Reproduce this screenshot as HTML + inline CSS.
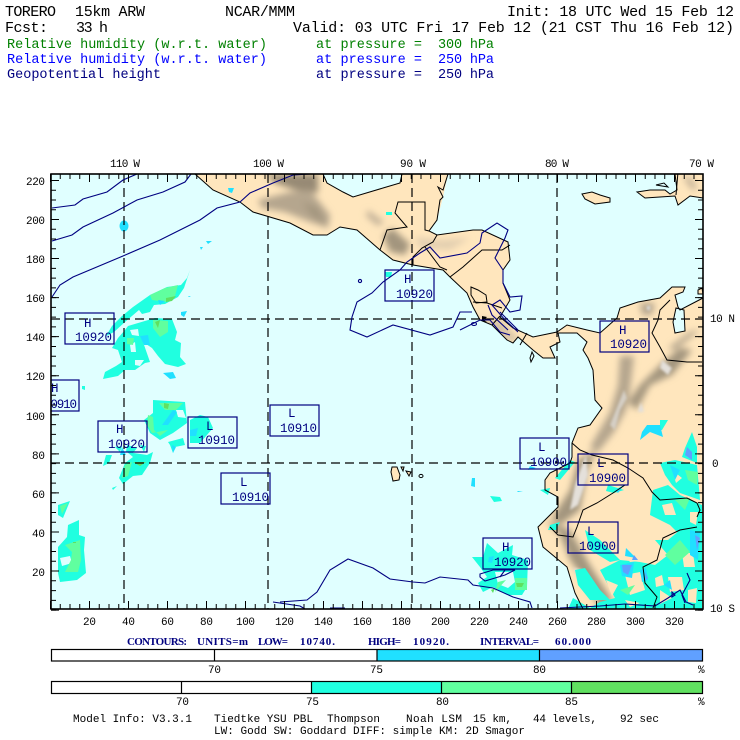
<!DOCTYPE html>
<html><head><meta charset="utf-8"><style>
html,body{margin:0;padding:0;background:#fff;width:740px;height:740px;overflow:hidden}
svg{display:block}
text{font-family:"Liberation Mono",monospace;fill:#000;}
.h{font-size:15px}.g{font-size:13.5px;fill:#008000}.b{font-size:13.5px;fill:#0000ff}.n{font-size:13.5px;fill:#000080}
.a{font-size:11px}.k{font-size:12.5px;fill:#000080}
.c{font-family:"Liberation Serif",serif;font-weight:bold;font-size:11px;fill:#000080}
.m{font-size:11px}
</style></head><body>
<svg width="740" height="740" viewBox="0 0 740 740" xmlns="http://www.w3.org/2000/svg">
<defs>
<clipPath id="map"><rect x="51" y="174" width="652" height="435"/></clipPath>
<clipPath id="landclip"><path id="lp" d="M195,174 L213,190 L240,202 L253,212 L290,223 L313,235 L327,235 L340,227 L357,230 L380,250 L393,260 L413,265 L443,270 L450,277 L467,293 L473,307 L480,320 L492,325 L507,340 L513,343 L518,337 L533,350 L543,358 L555,358 L550,347 L560,342 L558,333 L577,333 L587,342 L583,350 L588,358 L593,370 L595,400 L602,408 L590,425 L578,428 L572,443 L572,457 L570,463 L550,473 L545,480 L545,490 L558,497 L558,507 L548,517 L538,527 L543,547 L567,567 L575,593 L583,609 L703,609 L703,298 L680,310 L678,307 L675,295 L683,292 L685,287 L672,287 L660,298 L638,302 L620,308 L617,318 L600,333 L587,330 L567,325 L557,332 L533,337 L513,328 L500,317 L510,300 L503,283 L503,270 L510,260 L508,242 L482,230 L473,230 L437,235 L429,231 L437,220 L440,200 L443,197 L438,187 L443,190 L448,174 L402,174 L400,183 L383,188 L353,197 L343,192 L327,183 L323,174 Z M582,194 L592,192 L600,195 L610,198 L610,202 L595,204 L585,199 Z M637,192 L650,190 L665,190 L670,194 L677,190 L675,174 L703,174 L703,198 L690,196 L678,205 L675,196 L660,197 L645,198 Z M702,288 L698,290 L698,294 L703,294 Z M392,467 L397,467 L400,475 L399,480 L393,481 L391,472 Z M401,467 L404,467 L403,471 Z M406,471 L411,472 L409,476 Z"/></clipPath>
<filter id="bl" x="-20%" y="-20%" width="140%" height="140%"><feGaussianBlur stdDeviation="3.5"/></filter>
<filter id="bs" x="-30%" y="-30%" width="160%" height="160%"><feGaussianBlur stdDeviation="1.2"/></filter>
</defs>
<rect width="740" height="740" fill="#fff"/>

<text class="h" x="5" y="16" textLength="51">TORERO</text>
<text class="h" x="75" y="16" textLength="70">15km ARW</text>
<text class="h" x="225" y="16" textLength="70">NCAR/MMM</text>
<text class="h" x="507" y="16" textLength="227">Init: 18 UTC Wed 15 Feb 12</text>
<text class="h" x="5" y="32" textLength="43">Fcst:</text>
<text class="h" x="76" y="32" textLength="32">33 h</text>
<text class="h" x="293" y="32" textLength="441">Valid: 03 UTC Fri 17 Feb 12 (21 CST Thu 16 Feb 12)</text>
<text class="g" x="7" y="48" textLength="260">Relative humidity (w.r.t. water)</text>
<text class="g" x="316" y="48" textLength="106">at pressure =</text>
<text class="g" x="438" y="48" textLength="56">300 hPa</text>
<text class="b" x="7" y="63" textLength="260">Relative humidity (w.r.t. water)</text>
<text class="b" x="316" y="63" textLength="106">at pressure =</text>
<text class="b" x="438" y="63" textLength="56">250 hPa</text>
<text class="n" x="7" y="78" textLength="154">Geopotential height</text>
<text class="n" x="316" y="78" textLength="106">at pressure =</text>
<text class="n" x="438" y="78" textLength="56">250 hPa</text>

<text class="a" x="110" y="167" textLength="30">110 W</text>
<text class="a" x="253" y="167" textLength="31">100 W</text>
<text class="a" x="400" y="167" textLength="26">90 W</text>
<text class="a" x="545" y="167" textLength="24">80 W</text>
<text class="a" x="689" y="167" textLength="25">70 W</text>

<rect x="51" y="174" width="652" height="435" fill="#e0ffff"/>
<g clip-path="url(#map)">
<!-- land -->
<use href="#lp" fill="#ffe6bd"/>
<path d="M402,174 L448,174 L443,197 L437,220 L429,231 L437,235 L425,240 L395,225 L383,188 L400,183Z" fill="#ffe6bd"/>
<!-- terrain -->
<g clip-path="url(#landclip)">
<g filter="url(#bl)" fill="#978a75">
<path d="M265,174 L318,174 L318,193 L295,190 L275,183Z" />
<path fill="#b5a68e" d="M258,200 L290,192 L310,190 L330,215 L328,228 L310,222 L285,212 L262,208Z"/>
<path fill="#a3957e" d="M302,202 L318,208 L326,225 L312,216Z"/>
<path fill="#a3957e" d="M383,236 L392,228 L410,244 L405,255 L390,252Z"/>
<path fill="#c2b198" d="M368,210 L384,222 L378,226 L366,216Z"/>
<path fill="#d5c2a5" d="M476,318 L500,320 L520,340 L510,342 L490,330Z"/>
<path fill="#e3cfb0" d="M415,237 L440,240 L470,238 L450,250 L420,248Z"/>
<path fill="#b5a68e" d="M620,356 L634,356 L630,390 L626,410 L614,432 L598,452 L590,447 L610,412 L618,385Z"/>
<path fill="#a3957e" d="M692,350 L672,375 L650,385 L637,410 L628,402 L640,385 L660,365 L680,348Z"/>
<path fill="#a3957e" d="M597,450 L587,470 L580,510 L560,525 L552,518 L570,490 L578,460Z"/>
<path fill="#a3957e" d="M545,520 L570,530 L590,565 L612,600 L600,609 L585,580 L570,560 L560,535Z"/>
<path fill="#b5a68e" d="M690,332 L700,330 L675,350 L668,348Z"/>
<path fill="#b5a68e" d="M640,303 L655,303 L652,315 L642,315Z"/>
<path fill="#c2b198" d="M683,177 L690,177 L698,188 L692,190Z"/>
</g>
<g filter="url(#bs)" fill="#e4e0da">
<path d="M662,360 L672,368 L668,375 L660,368Z"/>
<path d="M624,390 L627,398 L620,410 L615,430 L610,425 L618,405Z" fill="#d5cfc5"/>
<path d="M641,402 L644,412 L638,412Z"/>
<path d="M586,455 L588,475 L578,505 L570,510 L575,485 L582,465Z"/>
<path d="M573,568 L582,570 L600,598 L595,600 L580,580Z"/>
<path d="M647,306 L650,306 L650,310 L647,310Z" fill="#ddd"/>
</g>
</g>
<!-- lakes -->
<path d="M676,308 L684,310 L685,331 L675,333 L673,322Z" fill="#e0ffff"/>

<!-- rain teal -->
<g fill="#20ffe0">
<path d="M190,270 L187,278 L181,285 L167,287 L150,295 L133,307 L122,316 L112,326 L106,336 L114,332 L125,322 L139,310 L142,314 L150,312 L154,305 L165,304 L178,297 L184,288Z"/>
<path d="M128,326 L155,318 L172,319 L177,332 L175,340 L181,343 L180,357 L186,364 L178,367 L165,364 L158,356 L152,348 L143,342 L150,362 L145,363 L135,370 L125,370 L118,376 L103,379 L105,372 L116,366 L122,362 L118,350 L112,348 L118,338 L125,330Z"/>
<path d="M153,400 L185,402 L187,423 L173,433 L160,440 L150,433 L144,420 L153,413Z"/>
<path d="M168,442 L183,438 L185,445 L175,447 L173,453 L170,445Z"/>
<path d="M190,420 L200,415 L208,417 L213,428 L200,443 L190,443Z"/>
<path d="M103,466 L106,455 L112,455 L109,463Z"/>
<path d="M115,447 L122,446 L120,452Z M127,445 L137,448 L133,453 L126,452Z M140,445 L146,446 L144,452Z"/>
<path d="M127,452 L147,455 L153,452 L150,463 L142,475 L133,476 L123,484 L119,478 L125,463 L133,457Z"/>
<path d="M112,488 L117,486 L113,490Z"/>
<path d="M58,505 L70,501 L63,518 L58,515Z"/>
<path d="M68,525 L79,520 L79,535 L85,537 L84,550 L86,573 L77,580 L60,582 L58,573 L58,547 L67,537Z"/>
<path d="M487,543 L498,553 L513,545 L512,555 L528,560 L527,587 L522,595 L507,595 L493,587 L483,592 L478,583 L487,577 L480,567 L472,557 L483,557Z"/>
<path d="M490,496 L500,497 L502,501 L494,502Z"/>
<path d="M385,272 L392,272 L391,277 L386,277Z M386,212 L392,212 L392,215 L386,215Z"/>
<path d="M82,386 L85,386 L85,390 L82,389Z"/>
<path d="M660,463 L675,460 L697,465 L700,500 L680,493 L672,485 L665,475Z"/>
<path d="M653,490 L668,485 L680,495 L702,505 L702,530 L690,545 L670,525 L650,515Z"/>
<path d="M655,540 L668,540 L680,530 L702,530 L702,609 L568,609 L573,598 L590,608 L600,602 L615,598 L600,570 L620,560 L640,562 L655,565 L668,555Z"/>
<path d="M660,420 L668,420 L662,430 L660,430Z M570,460 L575,462 L560,480 L555,478Z M540,490 L550,488 L548,495Z"/>
<path d="M550,525 L560,522 L556,530 L548,530Z M585,530 L600,540 L620,560 L610,562 L590,550Z"/>
<path d="M575,570 L585,568 L600,590 L610,600 L590,600 L578,585Z"/>
<path d="M692,432 L697,447 L697,463 L682,457 L685,448Z"/>
<path d="M608,485 L624,490 L614,493 L606,491Z"/>
</g>
<!-- rain holes -->
<g fill="#e0ffff">
<path d="M130,330 L138,329 L139,336 L132,335Z M130,345 L135,342 L136,352 L131,352Z M135,360 L144,360 L140,366 L135,365Z M152,313 L162,309 L166,306 L158,314Z M60,558 L70,556 L72,563 L62,566Z M176,410 L183,410 L186,418 L178,417Z"/>
<path d="M495,572 L513,572 L515,582 L508,588 L498,584Z"/>
</g>
<g fill="#ffe6bd">
<path d="M620,550 L640,545 L650,560 L630,562Z M662,505 L672,503 L676,515 L665,515Z M668,577 L682,577 L684,590 L670,592Z M660,590 L672,598 L660,604Z M682,553 L693,553 L695,567 L684,567Z M625,575 L640,572 L645,590 L630,595Z M606,580 L618,585 L612,596Z M655,578 L662,575 L664,585 L656,587Z M688,590 L697,588 L696,603 L688,602Z M690,512 L698,512 L696,525 L690,522Z M672,470 L682,478 L676,483Z M625,600 L640,603 L630,607Z"/>
</g>
<!-- rain green -->
<g fill="#60ff9f">
<path d="M150,295 L165,288 L178,285 L175,296 L165,302 L152,300Z"/>
<path d="M153,320 L168,321 L168,332 L160,337 L153,328Z"/>
<path d="M127,338 L134,338 L133,345 L127,344Z"/>
<path d="M159,403 L183,403 L176,410 L165,410Z"/>
<path d="M148,415 L153,417 L154,430 L160,436 L168,430 L152,433 L147,425Z"/>
<path d="M125,465 L132,462 L128,476 L122,478Z"/>
<path d="M60,506 L68,503 L62,514Z"/>
<path d="M65,545 L80,540 L81,560 L78,572 L65,572 L71,560 L72,552Z"/>
<path d="M498,582 L506,580 L495,592Z"/>
<path d="M515,578 L527,578 L527,590 L515,590Z"/>
<path d="M675,500 L690,498 L685,510Z M685,470 L698,472 L697,485 L688,480Z M620,590 L635,585 L628,595Z M665,555 L680,540 L690,552 L675,565Z"/>
</g>
<g fill="#60e060">
<path d="M166,298 L176,296 L172,301 L166,302Z M155,322 L160,320 L158,328Z M164,403 L169,404 L168,409 L164,408Z M516,583 L524,583 L522,587 L517,587Z M491,590 L495,588 L493,593Z M73,542 L76,542 L76,543 L73,543Z M133,462 L146,462 L140,466Z"/>
</g>
<!-- rain blue -->
<g fill="#20e0ff">
<ellipse cx="124" cy="226" rx="4.5" ry="5.5"/>
<path d="M228,188 L234,188 L232,193 L229,192Z M206,241 L212,241 L208,244Z M200,247 L203,247 L201,250Z M181,312 L187,311 L184,317 L181,315Z M188,296 L191,296 L189,297Z M158,300 L165,301 L160,305Z M140,336 L148,335 L150,345 L144,345Z M163,373 L173,372 L176,378 L170,379Z M173,410 L177,412 L168,425 L162,425Z M172,445 L176,447 L173,453Z M122,447 L126,455 L120,455Z M190,430 L198,428 L196,436 L190,436Z"/>
<path d="M647,425 L660,425 L663,437 L650,432 L640,440 L642,432Z M472,478 L475,478 L475,487 L471,486Z M517,491 L523,491 L518,492Z M489,557 L494,556 L492,563 L488,562Z M530,466 L536,468 L528,470Z M670,465 L680,470 L675,480Z M615,490 L624,485 L618,493Z M626,548 L636,558 L625,556Z M640,570 L646,568 L648,580 L642,582Z M664,585 L670,580 L672,590Z M690,530 L700,532 L698,560 L690,555Z M620,565 L634,562 L632,578 L622,576Z"/>
</g>
<g fill="#60a0ff">
<path d="M687,447 L692,452 L692,460 L685,455Z M622,565 L632,565 L628,575 L623,572Z M645,572 L648,578 L646,580Z M634,555 L638,560 L632,560Z M695,535 L700,538 L697,550Z"/>
</g>

<!-- land outlines -->
<g fill="none" stroke="#000" stroke-width="1">
<use href="#lp"/>
<path d="M380,250 L387,230 L407,227 L395,213 L398,202 L425,202 L425,230 L429,231 M437,235 L433,242 L422,248 L413,257 L413,265 M425,247 L440,267 L447,270 M450,277 L463,267 L482,250 L502,250 L510,245 M473,302 L487,303 L502,308 M492,325 L500,316 M527,333 L520,345"/>
<path d="M471,287 L478,290 L486,295 L487,302 L476,303 L471,295Z"/>
<path d="M670,300 L660,310 L658,320 L652,333 L660,347 L667,360 L687,362 L702,362"/>
<path d="M572,443 L580,450 L592,455 L613,460 L628,468 L643,478 L652,492 L660,500 L687,498 L697,503 L700,510 L697,517"/>
<path d="M625,485 L613,493 L597,503 L583,510 L577,527 L573,537 L558,535 L550,527"/>
<path d="M697,527 L680,530 L663,538 L657,560 L643,567 L645,583 L657,597 L653,608"/>
<path d="M676,308 L684,310 L685,331 L675,333 L673,322Z"/>
<path d="M678,172 L676,195 M656,185 L668,187 L664,183Z"/>
<path d="M530,358 L532,352 L534,356 L531,362Z"/>
<ellipse cx="421" cy="476" rx="2" ry="1.6"/>
</g>
<path d="M482,316 L487,317 L484,320 L487,322 L482,321Z" fill="#000"/>

<!-- dashed grid -->
<g stroke="#000" stroke-width="1.2" stroke-dasharray="9 5" fill="none">
<path d="M124,174V609M268,174V609M412,174V609M557,174V609M51,319H703M51,463H703"/>
</g>

<!-- contours -->
<g fill="none" stroke="#000080" stroke-width="1.1">
<path d="M52,208 L75,205 L83,199 L107,192 L123,180 L137,174"/>
<path d="M52,241 L72,235 L83,227 L113,213 L137,200 L163,192 L185,182 L191,174"/>
<path d="M52,297 L60,285 L73,277 L123,256 L160,240 L200,220 L217,208 L240,202 L250,193 L273,183 L293,175 L310,174"/>
<path d="M472,312 L460,312 L453,327 L430,335 L393,325 L367,337 L350,330 L352,317 L357,302 L372,293 L383,282 L400,270 L407,262 L420,253 L430,247 L440,258 L467,253 L480,243 L482,233 L497,223 L508,230 L505,238 L495,258 L503,270 L503,283 L510,297 L522,296 L520,310 L510,312 L500,300 L492,305 L505,320 L518,332"/>
<path d="M460,330 L480,320 L490,320 L500,332 L510,335 M488,305 L492,315 L508,330 M500,312 L518,330"/>
<ellipse cx="360" cy="281" rx="1.6" ry="1.6"/>
<ellipse cx="474" cy="324" rx="2.5" ry="1.5"/>
<path d="M280,602 L307,600 L317,592 L330,570 L348,559 L373,568 L390,579 L413,582 L425,583 L440,577 L468,580 L473,585 L493,588 L513,597 L530,602 L532,608"/>
<path d="M480,577 L485,581 L505,575 L515,570 L493,570 L480,574Z"/>
<path d="M273,602 L300,606 L305,609 M330,608 L345,608"/>
<path d="M500,577 L505,570 M560,608 L600,606 L625,604 L655,606 L668,598 L680,590 L686,602 L693,605"/>
<path d="M687,573 L690,580 L682,595 L685,603 M672,592 L675,595 L672,597Z"/>
</g>

<!-- labels -->
<g fill="none" stroke="#000080" stroke-width="1.2">
<rect x="65" y="313" width="49" height="31"/>
<rect x="40" y="380" width="39" height="31"/>
<rect x="98" y="421" width="49" height="31"/>
<rect x="188" y="417" width="49" height="31"/>
<rect x="270" y="405" width="49" height="31"/>
<rect x="221" y="473" width="49" height="31"/>
<rect x="385" y="270" width="49" height="31"/>
<rect x="600" y="321" width="49" height="31"/>
<rect x="520" y="438" width="49" height="31"/>
<rect x="578" y="454" width="50" height="31"/>
<rect x="568" y="522" width="50" height="31"/>
<rect x="483" y="538" width="49" height="31"/>
</g>
<g>
<text class="k" x="84" y="327" textLength="8">H</text><text class="k" x="75" y="341" textLength="37">10920</text>
<text class="k" x="51" y="392" textLength="6">H</text><text class="k" x="44" y="408" textLength="33">10910</text>
<text class="k" x="116" y="433" textLength="8">H</text><text class="k" x="108" y="448" textLength="37">10920</text>
<text class="k" x="206" y="430" textLength="8">L</text><text class="k" x="198" y="444" textLength="37">10910</text>
<text class="k" x="288" y="417" textLength="8">L</text><text class="k" x="280" y="432" textLength="37">10910</text>
<text class="k" x="240" y="486" textLength="8">L</text><text class="k" x="232" y="501" textLength="37">10910</text>
<text class="k" x="404" y="283" textLength="8">H</text><text class="k" x="396" y="298" textLength="37">10920</text>
<text class="k" x="619" y="334" textLength="8">H</text><text class="k" x="610" y="348" textLength="37">10920</text>
<text class="k" x="538" y="451" textLength="8">L</text><text class="k" x="530" y="466" textLength="37">10900</text>
<text class="k" x="597" y="467" textLength="8">L</text><text class="k" x="589" y="482" textLength="37">10900</text>
<text class="k" x="587" y="535" textLength="8">L</text><text class="k" x="579" y="550" textLength="37">10900</text>
<text class="k" x="502" y="551" textLength="8">H</text><text class="k" x="494" y="566" textLength="37">10920</text>
</g>
</g>

<!-- ticks -->
<g fill="none" stroke="#000" stroke-width="1.1">
<line x1="50" x2="703" y1="176.5" y2="176.5" stroke-width="5" stroke-dasharray="1 8.75"/>
<line x1="50" x2="703" y1="606.5" y2="606.5" stroke-width="5" stroke-dasharray="1 8.75"/>
<line x1="50" x2="703" y1="605" y2="605" stroke-width="8" stroke-dasharray="1 38" stroke-dashoffset="-39"/>
<line x1="50" x2="703" y1="178" y2="178" stroke-width="8" stroke-dasharray="1 38" stroke-dashoffset="-39"/>
<line x1="53.5" x2="53.5" y1="610.6" y2="174" stroke-width="5" stroke-dasharray="1 8.765"/>
<line x1="55" x2="55" y1="610.6" y2="174" stroke-width="8" stroke-dasharray="1 38.06" stroke-dashoffset="-39.06"/>
<line x1="700.5" x2="700.5" y1="610.6" y2="174" stroke-width="5" stroke-dasharray="1 8.765"/>
<line x1="699" x2="699" y1="610.6" y2="174" stroke-width="8" stroke-dasharray="1 38.06" stroke-dashoffset="-39.06"/>
<rect x="51" y="174" width="652" height="435" stroke-width="1.6"/>
</g>

<!-- axis labels -->
<g>
<text class="a" x="26" y="185" textLength="19">220</text>
<text class="a" x="26" y="224" textLength="19">200</text>
<text class="a" x="26" y="263" textLength="19">180</text>
<text class="a" x="26" y="302" textLength="19">160</text>
<text class="a" x="26" y="341" textLength="19">140</text>
<text class="a" x="26" y="380" textLength="19">120</text>
<text class="a" x="26" y="420" textLength="19">100</text>
<text class="a" x="32" y="459" textLength="13">80</text>
<text class="a" x="32" y="498" textLength="13">60</text>
<text class="a" x="32" y="537" textLength="13">40</text>
<text class="a" x="32" y="576" textLength="13">20</text>
<text class="a" x="83" y="625" textLength="13">20</text>
<text class="a" x="122" y="625" textLength="13">40</text>
<text class="a" x="161" y="625" textLength="13">60</text>
<text class="a" x="200" y="625" textLength="13">80</text>
<text class="a" x="236" y="625" textLength="19">100</text>
<text class="a" x="275" y="625" textLength="19">120</text>
<text class="a" x="314" y="625" textLength="19">140</text>
<text class="a" x="353" y="625" textLength="19">160</text>
<text class="a" x="392" y="625" textLength="19">180</text>
<text class="a" x="431" y="625" textLength="19">200</text>
<text class="a" x="470" y="625" textLength="19">220</text>
<text class="a" x="509" y="625" textLength="19">240</text>
<text class="a" x="548" y="625" textLength="19">260</text>
<text class="a" x="587" y="625" textLength="19">280</text>
<text class="a" x="626" y="625" textLength="19">300</text>
<text class="a" x="665" y="625" textLength="19">320</text>
<text class="a" x="710" y="322" textLength="25">10 N</text>
<text class="a" x="712" y="467" textLength="7">0</text>
<text class="a" x="710" y="612" textLength="25">10 S</text>
</g>

<text class="c" x="127" y="645" textLength="60">CONTOURS:</text>
<text class="c" x="197" y="645" textLength="51">UNITS=m</text>
<text class="c" x="258" y="645" textLength="30">LOW=</text>
<text class="c" x="300" y="645" textLength="35">10740.</text>
<text class="c" x="368" y="645" textLength="33">HIGH=</text>
<text class="c" x="413" y="645" textLength="36">10920.</text>
<text class="c" x="480" y="645" textLength="59">INTERVAL=</text>
<text class="c" x="555" y="645" textLength="36">60.000</text>

<!-- colorbar 1 -->
<rect x="377" y="649.5" width="163" height="11.5" fill="#20e0ff"/>
<rect x="540" y="649.5" width="163" height="11.5" fill="#60a0ff"/>
<rect x="51.5" y="649.5" width="651" height="11.5" fill="none" stroke="#000" stroke-width="1.2"/>
<path d="M214.5,649.5V661M377,649.5V661M539.5,649.5V661" stroke="#000" stroke-width="1.2"/>
<text class="a" x="208" y="673" textLength="13">70</text>
<text class="a" x="370" y="673" textLength="13">75</text>
<text class="a" x="533" y="673" textLength="13">80</text>
<text class="a" x="698" y="673" textLength="8">%</text>

<!-- colorbar 2 -->
<rect x="311.5" y="681.5" width="130" height="12" fill="#20ffe0"/>
<rect x="441.5" y="681.5" width="130" height="12" fill="#60ff9f"/>
<rect x="571.5" y="681.5" width="131" height="12" fill="#60e060"/>
<rect x="51.5" y="681.5" width="651" height="12" fill="none" stroke="#000" stroke-width="1.2"/>
<path d="M181.5,681.5V693.5M311.5,681.5V693.5M441.5,681.5V693.5M571.5,681.5V693.5" stroke="#000" stroke-width="1.2"/>
<text class="a" x="176" y="705" textLength="13">70</text>
<text class="a" x="306" y="705" textLength="13">75</text>
<text class="a" x="436" y="705" textLength="13">80</text>
<text class="a" x="565" y="705" textLength="13">85</text>
<text class="a" x="698" y="705" textLength="8">%</text>

<text class="m" x="73" y="722" textLength="119">Model Info: V3.3.1</text>
<text class="m" x="214" y="722" textLength="99">Tiedtke YSU PBL</text>
<text class="m" x="327" y="722" textLength="53">Thompson</text>
<text class="m" x="406" y="722" textLength="56">Noah LSM</text>
<text class="m" x="473" y="722" textLength="39">15 km,</text>
<text class="m" x="533" y="722" textLength="64">44 levels,</text>
<text class="m" x="620" y="722" textLength="39">92 sec</text>
<text class="m" x="214" y="734" textLength="311">LW: Godd SW: Goddard DIFF: simple KM: 2D Smagor</text>
</svg>
</body></html>
